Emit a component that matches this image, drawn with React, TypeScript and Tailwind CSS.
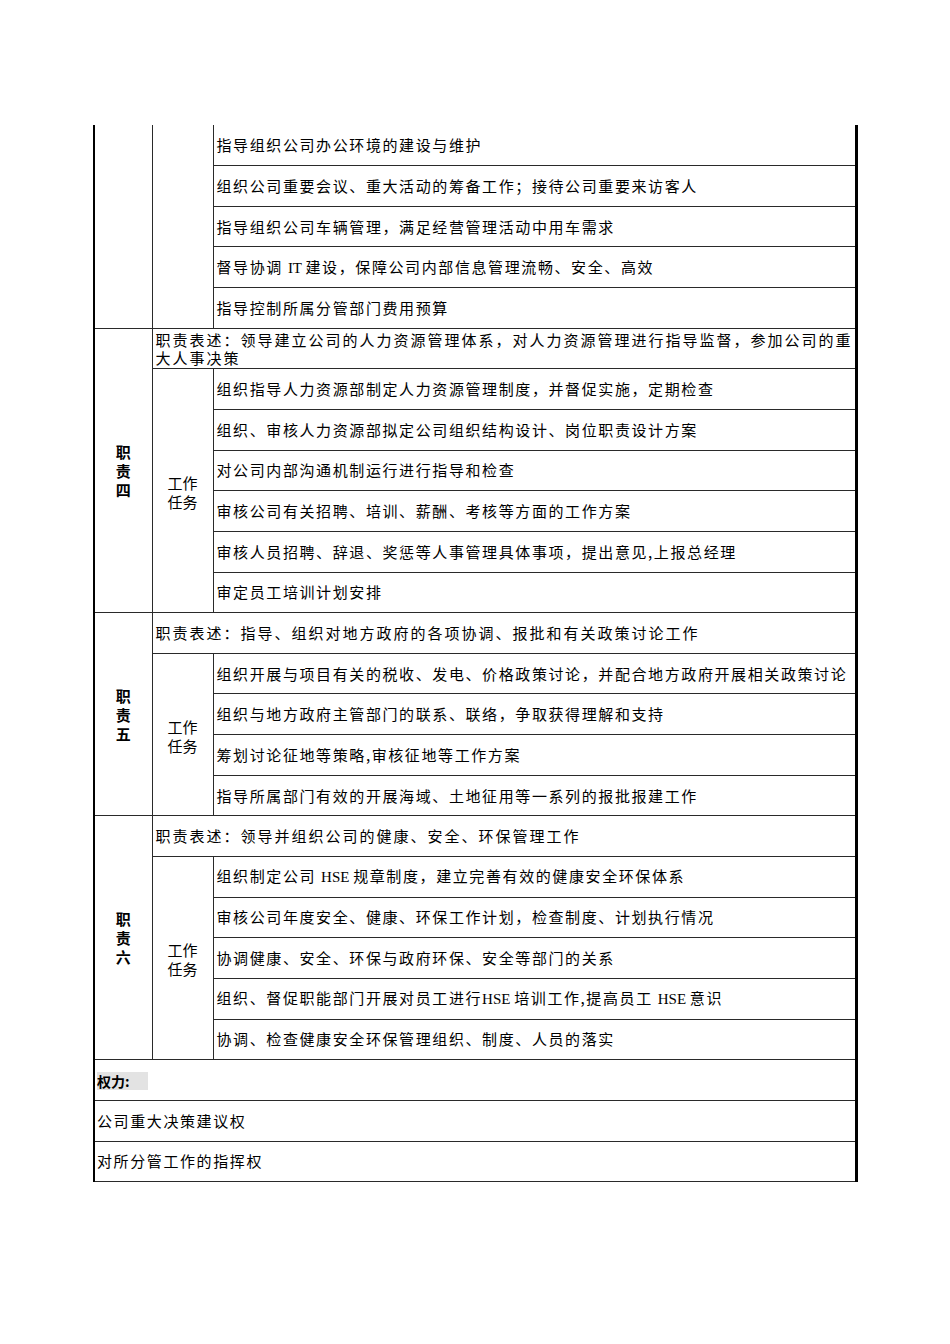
const cjk = "font-['Noto_Sans_CJK_SC',sans-serif]";

type Task = string | string[];

type Section = {
  label?: string;
  desc?: string;
  tasks: Task[];
};

// latin fragments are kept narrow like the source document
const Latin = ({ t }: { t: string }) => (
  <span className="font-['Liberation_Serif',serif] tracking-normal text-[15px]">{t} </span>
);

const sections: Section[] = [
  {
    tasks: [
      "指导组织公司办公环境的建设与维护",
      "组织公司重要会议、重大活动的筹备工作；接待公司重要来访客人",
      "指导组织公司车辆管理，满足经营管理活动中用车需求",
      ["督导协调 ", "IT", "建设，保障公司内部信息管理流畅、安全、高效"],
      "指导控制所属分管部门费用预算",
    ],
  },
  {
    label: "职责四",
    desc: "职责表述：领导建立公司的人力资源管理体系，对人力资源管理进行指导监督，参加公司的重\n大人事决策",
    tasks: [
      "组织指导人力资源部制定人力资源管理制度，并督促实施，定期检查",
      "组织、审核人力资源部拟定公司组织结构设计、岗位职责设计方案",
      "对公司内部沟通机制运行进行指导和检查",
      "审核公司有关招聘、培训、薪酬、考核等方面的工作方案",
      "审核人员招聘、辞退、奖惩等人事管理具体事项，提出意见,上报总经理",
      "审定员工培训计划安排",
    ],
  },
  {
    label: "职责五",
    desc: "职责表述：指导、组织对地方政府的各项协调、报批和有关政策讨论工作",
    tasks: [
      "组织开展与项目有关的税收、发电、价格政策讨论，并配合地方政府开展相关政策讨论",
      "组织与地方政府主管部门的联系、联络，争取获得理解和支持",
      "筹划讨论征地等策略,审核征地等工作方案",
      "指导所属部门有效的开展海域、土地征用等一系列的报批报建工作",
    ],
  },
  {
    label: "职责六",
    desc: "职责表述：领导并组织公司的健康、安全、环保管理工作",
    tasks: [
      ["组织制定公司 ", "HSE", "规章制度，建立完善有效的健康安全环保体系"],
      "审核公司年度安全、健康、环保工作计划，检查制度、计划执行情况",
      "协调健康、安全、环保与政府环保、安全等部门的关系",
      ["组织、督促职能部门开展对员工进行", "HSE", "培训工作,提高员工 ", "HSE", "意识"],
      "协调、检查健康安全环保管理组织、制度、人员的落实",
    ],
  },
];

const cell = "border border-[#2a2a2a] p-0";
const rowH = "h-[40.65px]";
const body = "text-[15px] leading-[18px] tracking-[1.6px]";

function TaskText({ t }: { t: Task }) {
  if (typeof t === "string") return <>{t}</>;
  return (
    <>
      {t.map((part, i) => (i % 2 === 1 ? <Latin key={i} t={part} /> : <span key={i}>{part}</span>))}
    </>
  );
}

export default function App() {
  return (
    <div className={`bg-white w-[950px] h-[1344px] pt-[125px] pl-[93px] text-black ${cjk}`}>
      <table className="table-fixed border-collapse w-[765px] border-l-2 border-r-[3px] border-black">
        <colgroup>
          <col className="w-[58px]" />
          <col className="w-[61px]" />
          <col />
        </colgroup>
        <tbody>
          {sections.map((s, si) => {
            const rows = [];
            const span = s.tasks.length + (s.desc ? 1 : 0);
            if (s.desc) {
              rows.push(
                <tr key={`d${si}`} className={rowH}>
                  <td rowSpan={span} className={`${cell} border-l-2 border-l-black text-center align-middle`}>
                    <div className="flex flex-col items-center text-[15px] font-bold leading-[19px]">
                      {s.label!.split("").map((c, i) => (
                        <div key={i}>{c}</div>
                      ))}
                    </div>
                  </td>
                  <td colSpan={2} className={`${cell} pl-[3px] ${body} tracking-[2px] whitespace-pre-line`}>
                    {s.desc}
                  </td>
                </tr>,
              );
            }
            s.tasks.forEach((t, ti) => {
              rows.push(
                <tr key={`t${si}-${ti}`} className={rowH}>
                  {!s.desc && ti === 0 && (
                    <td rowSpan={span} className={`${cell} border-t-0 border-l-2 border-l-black`} />
                  )}
                  {ti === 0 && (
                    <td
                      rowSpan={s.tasks.length}
                      className={`${cell} ${s.desc ? "" : "border-t-0"} text-center align-middle`}
                    >
                      {s.desc && (
                        <div className="flex flex-col items-center text-[15px] leading-[19px] pt-[2px]">
                          <div>工作</div>
                          <div>任务</div>
                        </div>
                      )}
                    </td>
                  )}
                  <td
                    className={`${cell} ${!s.desc && ti === 0 ? "border-t-0" : ""} pl-[3px] ${body} whitespace-nowrap`}
                  >
                    <TaskText t={t} />
                  </td>
                </tr>,
              );
            });
            return rows;
          })}
          <tr className={rowH}>
            <td colSpan={3} className={`${cell} pl-[2px]`}>
              <span className="bg-[#e3e3e3] font-bold text-[14px] leading-[18px] w-[51px] inline-block">
                权力:
              </span>
            </td>
          </tr>
          <tr className={rowH}>
            <td colSpan={3} className={`${cell} border-t-[#8a8a8a] pl-[2px] ${body}`}>
              公司重大决策建议权
            </td>
          </tr>
          <tr className={rowH}>
            <td colSpan={3} className={`${cell} border-t-[#8a8a8a] pl-[2px] ${body}`}>
              对所分管工作的指挥权
            </td>
          </tr>
        </tbody>
      </table>
    </div>
  );
}
